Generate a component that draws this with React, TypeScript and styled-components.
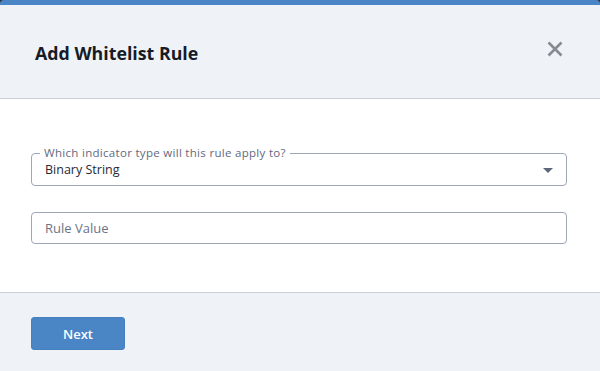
import styled, { createGlobalStyle } from 'styled-components'

const GlobalStyle = createGlobalStyle`
  html, body {
    margin: 0;
    padding: 0;
    background: #2b2f36;
  }
  body {
    font-family: "Open Sans", "Noto Sans", Arial, sans-serif;
  }
`

function App() {
  return (
    <>
      <GlobalStyle />
      <Modal>
        <Header>
          <Title>Add Whitelist Rule</Title>
          <CloseButton aria-label="Close">
            <svg width="16" height="16" viewBox="0 0 16 16">
              <path d="M1.5 1.5 L14.5 14.5 M14.5 1.5 L1.5 14.5" stroke="#868b92" strokeWidth="2.6" />
            </svg>
          </CloseButton>
        </Header>
        <Body>
          <SelectField>
            <Legend>Which indicator type will this rule apply to?</Legend>
            <SelectValue>Binary String</SelectValue>
            <Caret />
          </SelectField>
          <TextInput placeholder="Rule Value" />
        </Body>
        <Footer>
          <PrimaryButton>Next</PrimaryButton>
        </Footer>
      </Modal>
    </>
  )
}

const Modal = styled.div`
  width: 600px;
  height: 371px;
  display: flex;
  flex-direction: column;
  background: #ffffff;
  border-top: 5px solid #4a86c5;
  border-radius: 4px 4px 0 0;
  box-sizing: border-box;
  overflow: hidden;
`
const Header = styled.header`
  flex-shrink: 0;
  height: 94px;
  box-sizing: border-box;
  background: #eff3f8;
  border-bottom: 1px solid #c9cfd8;
  display: flex;
  align-items: center;
  justify-content: space-between;
  padding: 0 35px;
`
const Title = styled.h2`
  margin: 2px 0 0;
  font-size: 17.8px;
  font-weight: 700;
  color: #171b26;
`
const CloseButton = styled.button`
  border: 0;
  background: none;
  padding: 0;
  width: 16px;
  height: 16px;
  margin-right: 2px;
  margin-top: -5px;
  display: flex;
  cursor: pointer;
`
const Body = styled.div`
  flex-shrink: 0;
  height: 194px;
  box-sizing: border-box;
  border-bottom: 1px solid #c9cfd8;
  padding: 48px 33px 0 31px;
  display: flex;
  flex-direction: column;
  gap: 26px;
`
const SelectField = styled.fieldset`
  position: relative;
  margin: 0;
  padding: 0 13px;
  height: 39px;
  box-sizing: border-box;
  border: 1px solid #9ea6b8;
  border-radius: 4px;
  display: flex;
  align-items: center;
`
const Legend = styled.legend`
  margin-left: -5px;
  padding: 0 4px;
  font-size: 11.5px;
  line-height: 12px;
  color: #5f6a80;
  letter-spacing: 0.3px;
`
const SelectValue = styled.span`
  font-size: 12.5px;
  line-height: 16px;
  color: #252a35;
  margin-top: 3px;
`
const Caret = styled.span`
  position: absolute;
  right: 13px;
  top: 9px;
  width: 0;
  height: 0;
  border-left: 5px solid transparent;
  border-right: 5px solid transparent;
  border-top: 5px solid #5e6779;
`
const TextInput = styled.input`
  height: 32px;
  box-sizing: border-box;
  border: 1px solid #9ea6b8;
  border-radius: 4px;
  padding: 0 13px;
  font-family: inherit;
  font-size: 13px;
  color: #252a35;
  outline: none;

  &::placeholder {
    color: #6b7487;
  }
`
const Footer = styled.footer`
  flex: 1;
  background: #eff3f8;
  padding: 24px 31px 0;
`
const PrimaryButton = styled.button`
  width: 94px;
  height: 33px;
  border: 1px solid #4580bf;
  border-radius: 3px;
  background: #4a86c5;
  color: #ffffff;
  font-family: inherit;
  font-size: 13px;
  font-weight: 600;
  cursor: pointer;
`

export default App
